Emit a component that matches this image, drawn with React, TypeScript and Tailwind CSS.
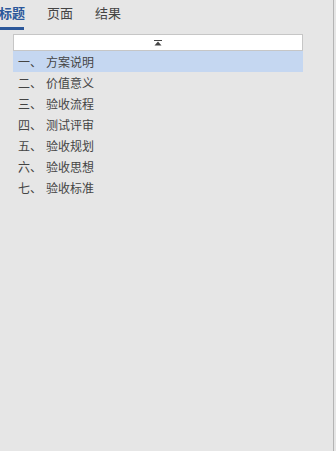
const items = [
  ["一、", "方案说明"],
  ["二、", "价值意义"],
  ["三、", "验收流程"],
  ["四、", "测试评审"],
  ["五、", "验收规划"],
  ["六、", "验收思想"],
  ["七、", "验收标准"],
]

export default function App() {
  return (
    <div
      className="flex w-[336px] h-[451px] bg-[#e6e6e6] overflow-hidden text-[#444]"
      style={{ fontFamily: '"Noto Sans CJK SC", "Noto Sans", sans-serif' }}
    >
      <div className="w-[333px] flex flex-col">
        <div className="flex h-[30px] -ml-px">
          <div className="relative w-[48px] pt-[5px] text-[13px] leading-[16px] font-bold text-[#2b579a]">
            标题
            <div className="absolute left-px top-[27px] w-[24px] h-[3px] bg-[#2b579a]" />
          </div>
          <div className="w-[48px] pt-[5px] text-[13px] leading-[16px]">页面</div>
          <div className="w-[48px] pt-[5px] text-[13px] leading-[16px]">结果</div>
        </div>

        <div className="ml-[13px] mt-[4px] w-[290px] flex flex-col">
          <div className="h-[17px] bg-white border border-[#c6c6c6] flex items-center justify-center">
            <svg width="8" height="6" viewBox="0 0 8 6">
              <rect x="0" y="0" width="8" height="1" fill="#444" />
              <path d="M4 1.5 L7.5 5.5 L0.5 5.5 Z" fill="#444" />
            </svg>
          </div>
          {items.map(([num, name], i) => (
            <div
              key={name}
              className={`flex items-center h-[21px] text-[12px] ${i === 0 ? "bg-[#c5d7f1]" : ""}`}
            >
              <span className="w-[33px] shrink-0 pl-[5px]">{num}</span>
              <span>{name}</span>
            </div>
          ))}
        </div>
      </div>
      <div className="w-px h-full bg-[#b4b4b4]" />
    </div>
  )
}
